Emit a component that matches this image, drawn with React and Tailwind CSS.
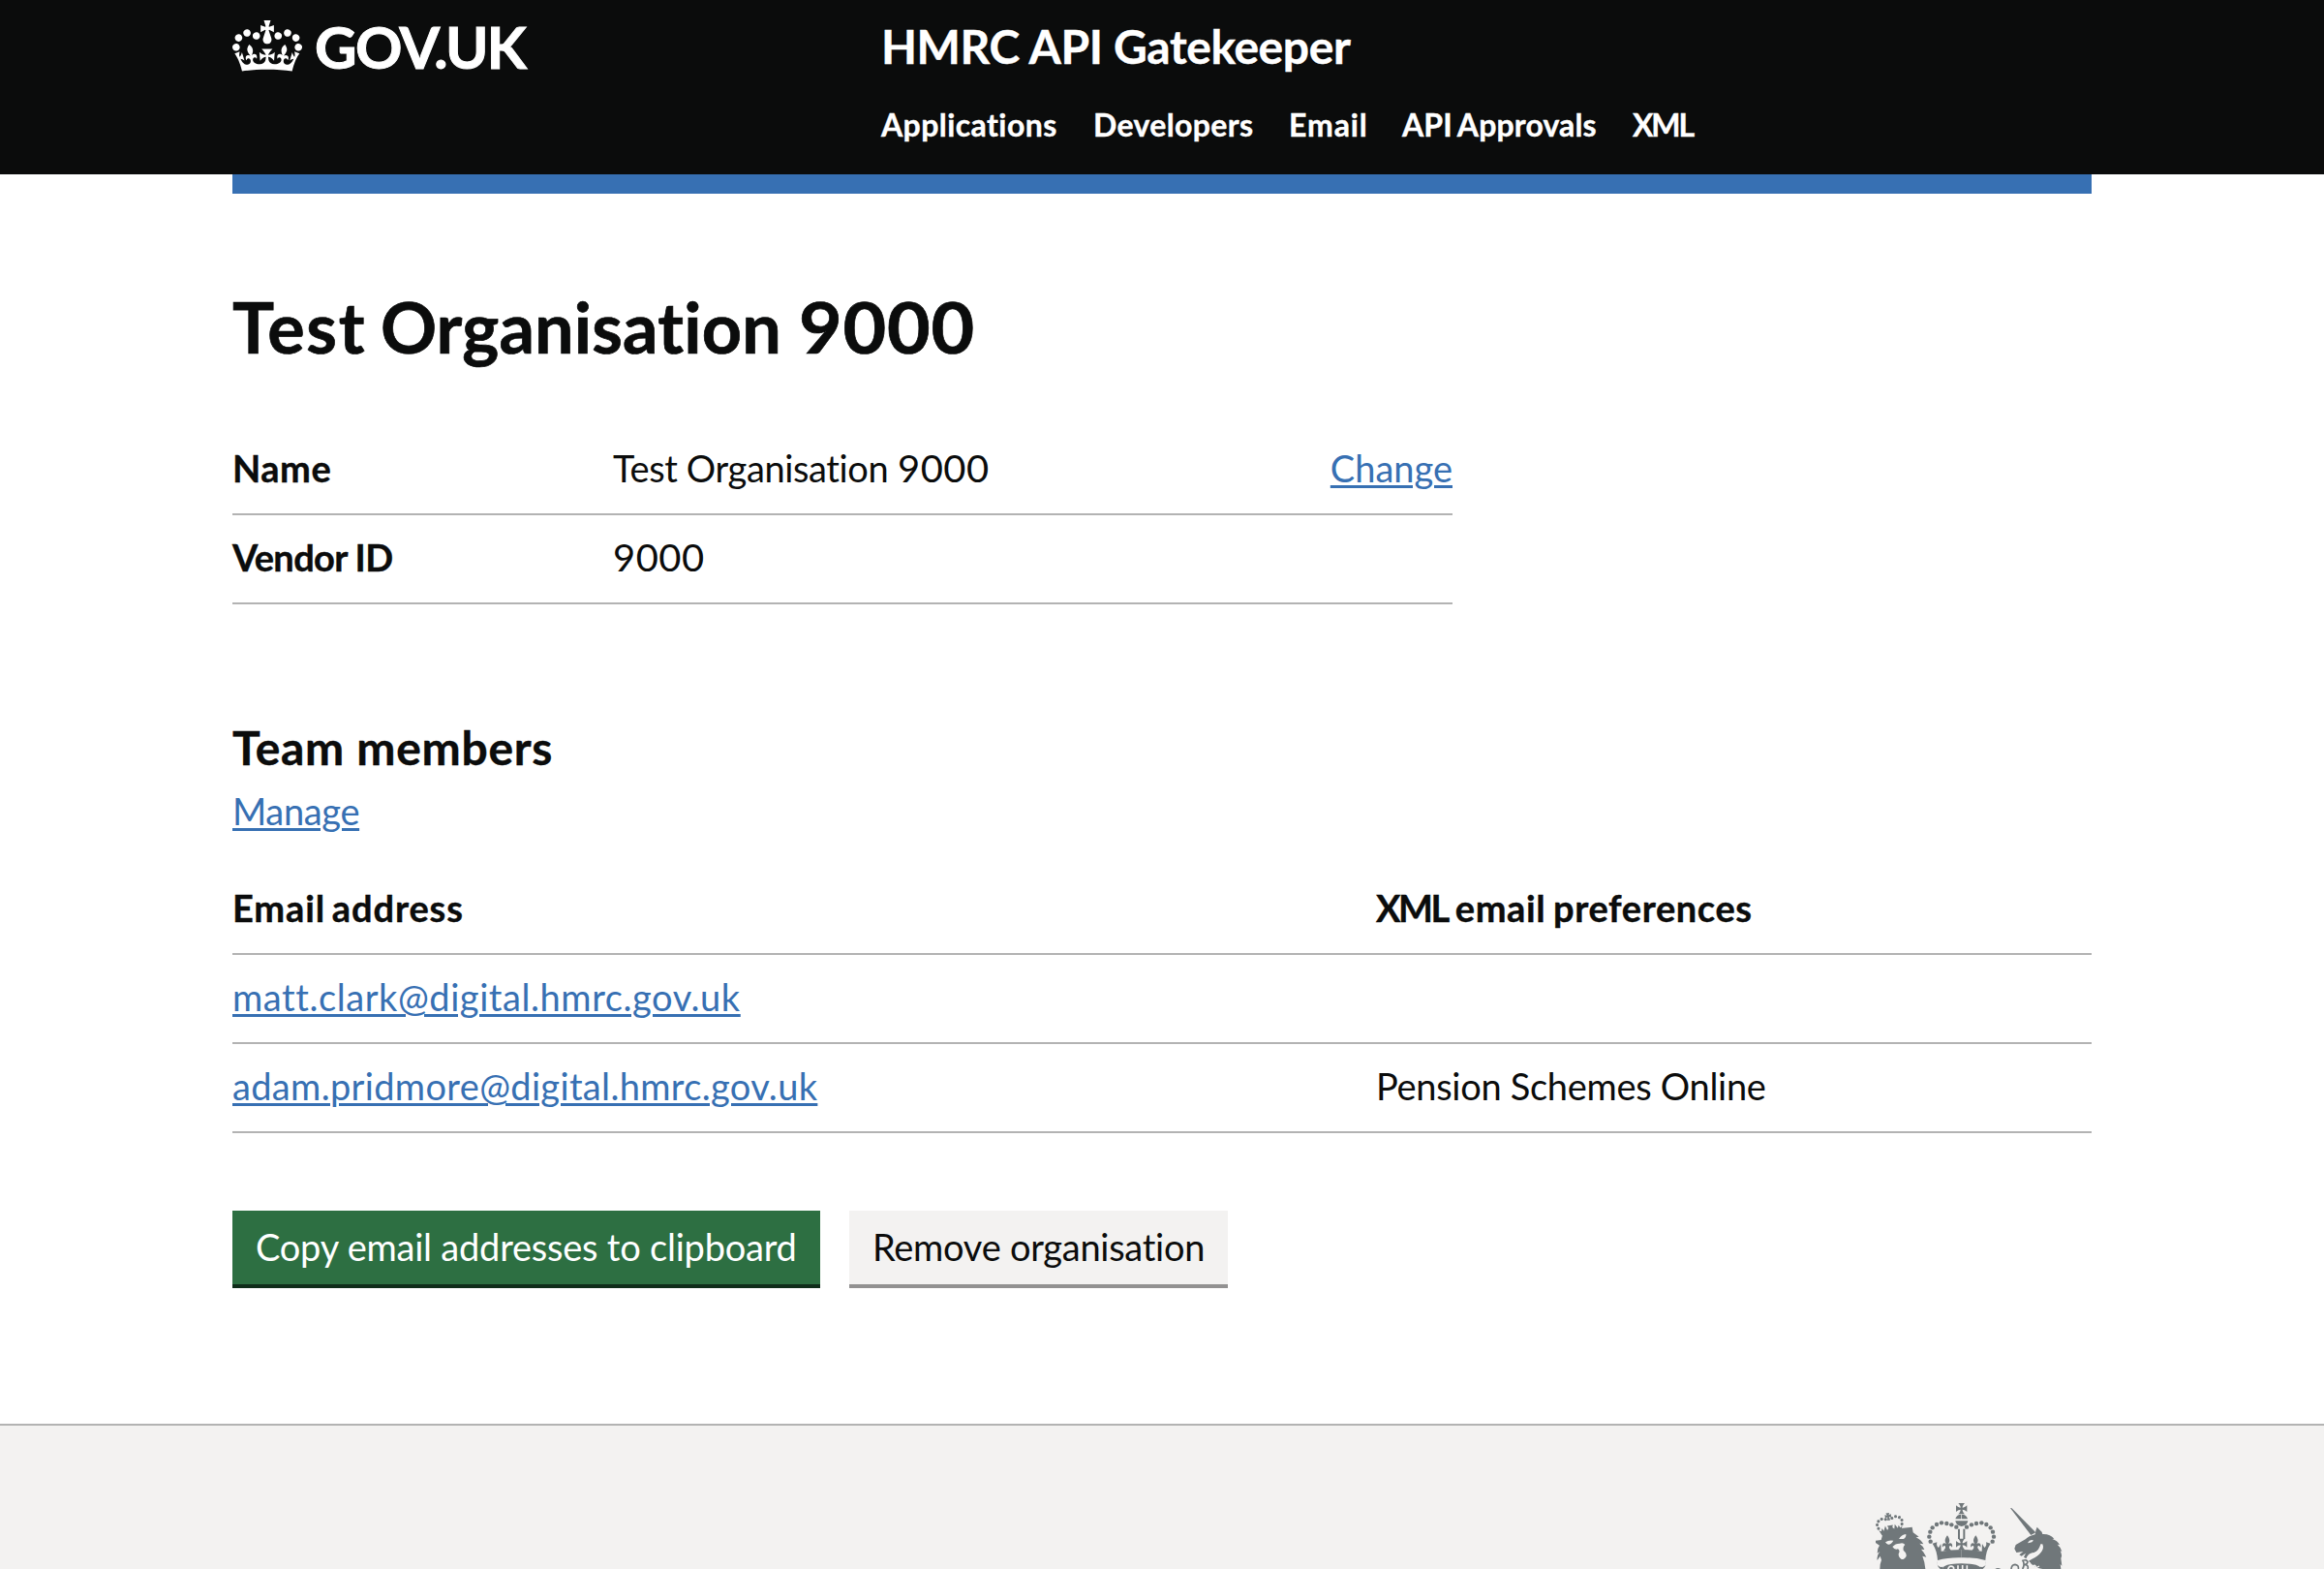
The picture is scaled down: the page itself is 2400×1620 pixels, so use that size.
import React from "react";

function CrownLogo() {
  return (
    <svg viewBox="0 0 132 97" className="h-[53px] w-[72px] shrink-0" fill="currentColor" aria-hidden="true">
      <path
        fillRule="evenodd"
        d="M25 30.2c3.5 1.5 7.7-.2 9.1-3.7 1.5-3.6-.2-7.8-3.9-9.2-3.6-1.4-7.6.3-9.1 3.9-1.4 3.5.3 7.5 3.9 9zM9 39.5c3.6 1.5 7.8-.2 9.2-3.7 1.5-3.6-.2-7.8-3.9-9.1-3.6-1.5-7.6.2-9.1 3.8-1.4 3.5.3 7.5 3.8 9zM4.4 57.2c3.5 1.5 7.7-.2 9.1-3.8 1.5-3.6-.2-7.7-3.9-9.1-3.5-1.5-7.6.3-9.1 3.8-1.4 3.5.3 7.6 3.9 9.1zm38.3-21.4c3.5 1.5 7.7-.2 9.1-3.8 1.5-3.6-.2-7.7-3.9-9.1-3.6-1.5-7.6.3-9.1 3.8-1.3 3.6.4 7.7 3.9 9.1zm64.4-5.6c-3.6 1.5-7.8-.2-9.1-3.7-1.5-3.6.2-7.8 3.8-9.2 3.6-1.4 7.7.3 9.2 3.9 1.3 3.5-.4 7.5-3.9 9zm15.9 9.3c-3.6 1.5-7.7-.2-9.1-3.7-1.5-3.6.2-7.8 3.7-9.1 3.6-1.5 7.7.2 9.2 3.8 1.5 3.5-.3 7.5-3.8 9zm4.7 17.7c-3.6 1.5-7.8-.2-9.2-3.8-1.5-3.6.2-7.7 3.9-9.1 3.6-1.5 7.7.3 9.2 3.8 1.3 3.5-.4 7.6-3.9 9.1zM89.3 35.8c-3.6 1.5-7.8-.2-9.2-3.8-1.4-3.6.2-7.7 3.9-9.1 3.6-1.5 7.7.3 9.2 3.8 1.4 3.6-.3 7.7-3.9 9.1zM69.7 17.7l8.9 4.7V9.3l-8.9 2.8c-.2-.3-.5-.6-.9-.9L72.4 0H59.6l3.5 11.2c-.3.3-.6.5-.9.9l-8.8-2.8v13.1l8.8-4.7c.3.3.6.7.9.9l-5 15.4v.1c-.2.8-.4 1.6-.4 2.4 0 4.1 3.1 7.5 7 8.1h.2c.3 0 .7.1 1 .1.4 0 .7 0 1-.1h.2c4-.6 7.1-4.1 7.1-8.1 0-.8-.1-1.7-.4-2.4V34l-5.1-15.4c.4-.2.7-.6 1-.9zM66 92.8c16.9 0 32.8 1.1 47.1 3.2 4-16.9 8.9-26.7 14-33.5l-9.6-3.4c1 4.9 1.1 7.2 0 10.2-1.5-1.4-3-4.3-4.2-8.7L108.6 76c2.8-2 5-3.2 7.5-3.3-4.4 9.4-10 11.9-13.6 11.2-4.3-.8-6.3-4.6-5.6-7.9 1-4.7 5.7-5.9 8-.5 4.3-8.7-3-11.4-7.6-8.8 7.1-7.2 7.9-13.5 2.1-21.1-8 6.1-8.1 12.3-4.5 20.8-4.7-5.4-12.1-2.5-9.5 6.2 3.4-5.2 7.9-2 7.2 3.1-.6 4.3-6.4 7.8-13.5 7.2-10.3-.9-10.9-8-11.2-13.8 2.5-.5 7.1 1.8 11 7.3L80.2 60c-4.1 4.4-8 5.3-12.3 5.4 1.4-4.4 8-11.6 8-11.6H55.5s6.4 7.2 7.9 11.6c-4.2-.1-8-1-12.3-5.4l1.4 16.4c3.9-5.5 8.5-7.7 10.9-7.3-.3 5.8-.9 12.8-11.1 13.8-7.2.6-12.9-2.9-13.5-7.2-.7-5 3.8-8.3 7.1-3.1 2.7-8.7-4.6-11.6-9.4-6.2 3.7-8.5 3.6-14.7-4.6-20.8-5.8 7.6-5 13.9 2.2 21.1-4.7-2.6-11.9.1-7.7 8.8 2.3-5.5 7.1-4.2 8.1.5.7 3.3-1.3 7.1-5.7 7.9-3.5.7-9-1.8-13.5-11.2 2.5.1 4.7 1.3 7.5 3.3l-4.7-15.4c-1.2 4.4-2.7 7.2-4.3 8.7-1.1-3-.9-5.3 0-10.2l-9.5 3.4c5 6.9 9.9 16.7 14 33.5 14.8-2.1 30.8-3.2 47.7-3.2z"
      />
    </svg>
  );
}

const BEADS = [
  [361, 410], [346, 403], [331, 399], [315, 397], [300, 402],
  [287, 412], [280, 425], [277, 440], [281, 455],
];

function HalfCrown() {
  return (
    <g>
      {BEADS.map(([x, y]) => (
        <circle key={x} cx={x} cy={y} r="6.6" />
      ))}
      <path d="M376 371C366 371 360 377 358 385H376Z" />
      <path d="M366 416h6v31h-6z" />
      <path d="M333 436C325 447 324 454 330 462C322 456 315 462 318 473C322 466 328 466 327 475L321 484H345L339 475C338 466 344 466 348 473C351 462 344 456 336 462C342 454 341 447 333 436Z" />
      <path d="M287 461L301 457C299 466 301 470 306 474L313 462L314 485Q345 480 377 480V505Q335 504 303 513C302 495 298 478 287 461Z" />
      <path d="M302 513Q298 530 312 534L320 533L318 540H311Q299 532 302 513Z" />
    </g>
  );
}

function CrestCross({ y }) {
  return (
    <path
      transform={`translate(377 ${y})`}
      d="M-10-17H10C5-12 3-7 3-3C7-3 12-5 17-10V10C12 5 7 3 3 3C3 7 5 12 10 17H-10C-5 12-3 7-3 3C-7 3-12 5-17 10V-10C-12-5-7-3-3-3C-3-7-5-12-10-17Z"
    />
  );
}

function Crest() {
  return (
    <svg viewBox="99 330 600 210" className="h-[70px] w-[200px]" fill="#70777a" aria-hidden="true">
      {/* lion */}
      <g transform="rotate(-11 155 402)">
        {[[118, 408], [116, 396], [122, 386], [133, 381], [145, 384], [165, 384], [177, 381], [188, 386], [194, 396], [192, 408]].map(([x, y]) => (
          <circle key={x} cx={x} cy={y} r="4.6" />
        ))}
        <path d="M149 366h11l-3 7 7-3v11l-7-3 2 11h-9l2-11-7 3v-11l7 3z" />
        <path d="M118 414l7 4 4-9 4 9 7-14 4 14 5-6-3-7h18l-3 7 5 6 4-14 7 14 4-9 4 9 7-4-7 17H125z" />
      </g>
      <path d="M132 436Q175 413 218 411L224 410L227 427L245 440L236 442Q252 450 259 463L247 461Q257 468 262 480L252 479Q261 488 268 503L256 500Q264 520 265 540H124Q123 526 129 512L125 500L116 513Q114 498 124 486L116 491Q115 477 123 467L111 459V452L128 450Z" />
      <g fill="#f3f2f1">
        <path d="M141 457Q152 449 166 452Q158 465 150 464Q144 463 141 457Z" />
        <path d="M183 447Q191 433 205 432Q206 443 197 447Z" />
        <path d="M163 471Q172 461 185 461Q197 457 202 465Q195 470 197 482Q207 490 206 500Q200 511 191 510Q181 504 182 493Q188 484 180 478Q170 482 163 471Z" />
      </g>
      {/* central crown */}
      <CrestCross y={353} />
      <path d="M358 391H397Q395 406 377 408Q360 406 358 391Z" />
      <HalfCrown />
      <g transform="translate(754 0) scale(-1 1)">
        <HalfCrown />
      </g>
      <CrestCross y={463} />
      <path d="M318 540Q318 529 345 525Q377 520 410 525Q437 529 437 540Z" />
      <path
        fill="none"
        stroke="#f3f2f1"
        strokeWidth="5"
        d="M335 542Q338 529 348 532Q356 536 351 542M366 529V542M380 528V542M394 529V542"
      />
      <path d="M481 540Q489 534 499 540Z" />
      {/* unicorn */}
      <path d="M528 351L533 352L607 427L592 435Z" />
      <path d="M541 477L545 465L575 448Q585 438 605 433Q606 420 611 410L621 421Q627 424 628 432Q652 431 664 446L658 447Q674 452 681 465L674 464Q686 474 688 486L683 484Q690 498 685 507L688 530L683 525L685 540H628Q600 535 585 515L594 510Q618 500 628 478Q631 467 626 466Q620 484 602 489Q582 492 577 508L570 503L576 491L563 500L556 496L568 486L553 488L547 489Z" />
      <g fill="#f3f2f1">
        <path d="M582 460Q586 449 599 450Q599 458 582 460Z" />
        <path d="M628 463Q634 480 618 494Q602 505 592 507Q584 511 580 505Q583 492 601 490Q617 484 622 463Z" />
      </g>
      <path
        fill="none"
        stroke="#70777a"
        strokeWidth="5"
        d="M531 540Q532 527 543 526Q555 528 553 540M566 540Q574 526 567 514Q578 509 582 518Q580 527 572 526Q586 527 582 540"
      />
      <path
        fill="none"
        stroke="#f3f2f1"
        strokeWidth="4"
        d="M588 520L592 538M596 533Q604 524 608 534L612 541M600 540L618 531"
      />
    </svg>
  );
}

const NAV = [
  { label: "Applications", cls: "w-[219px] tracking-[0.42px]" },
  { label: "Developers", cls: "w-[202px] tracking-[0.35px]" },
  { label: "Email", cls: "w-[117px] tracking-[0.9px]" },
  { label: "API Approvals", cls: "w-[238px] tracking-[0.15px] [word-spacing:-2px]" },
  { label: "XML", cls: "tracking-[-2.1px]" },
];

const LINK = "text-[#3770b3] underline decoration-[3px] underline-offset-[3px]";
const ROW = "flex h-[92px] border-b-2 border-[#b3b3b3] pt-[18px]";
const BOLD = "font-bold [-webkit-text-stroke:0.4px_currentColor]";

function Header() {
  return (
    <header className="bg-[#0b0c0c] text-white">
      <div className={`mx-auto flex h-[180px] w-[1920px] ${BOLD}`}>
        <a className="flex w-[670px] items-start">
          <span className="mt-[21px] mr-[13px]">
            <CrownLogo />
          </span>
          <span className="mt-[18px] text-[60px] leading-[60px] tracking-[-1.6px] [-webkit-text-stroke:1px_currentColor]">
            GOV.UK
          </span>
        </a>
        <div className="pt-[18px]">
          <div className="text-[48px] leading-[60px] tracking-[-0.4px]">HMRC API Gatekeeper</div>
          <nav className="mt-[31px] flex text-[32px] leading-[40px]">
            {NAV.map((n) => (
              <a key={n.label} className={n.cls}>{n.label}</a>
            ))}
          </nav>
        </div>
      </div>
    </header>
  );
}

export default function App() {
  return (
    <div className="flex h-[1620px] w-[2400px] flex-col overflow-hidden bg-white font-['Lato','Noto_Sans',sans-serif] text-[38px] leading-[50px] text-[#0b0c0c] [font-variant-ligatures:none]">
      <Header />
      <main className="mx-auto w-[1920px] flex-1">
        <div className="h-[20px] bg-[#3770b3]" />
        <h1 className="mt-[97px] text-[72px] leading-[80px] font-bold tracking-[0.15px] [-webkit-text-stroke:0.7px_currentColor]">
          <span className="tracking-[1.7px] [word-spacing:-4.5px]">Test </span>Organisation{" "}
          <span className="inline-block origin-left scale-x-[1.07] tracking-[0.8px]">9000</span>
        </h1>

        <dl className="mt-[63px] w-[1260px]">
          <div className={ROW}>
            <dt className={`w-[393px] tracking-[0.5px] ${BOLD}`}>Name</dt>
            <dd className="flex-1 tracking-[-0.37px]">
              Test Organisation <span className="inline-block origin-left scale-x-[1.05] tracking-[0.5px]">9000</span>
            </dd>
            <dd>
              <a className={LINK}>Change</a>
            </dd>
          </div>
          <div className={ROW}>
            <dt className={`w-[393px] tracking-[-0.65px] ${BOLD}`}>Vendor ID</dt>
            <dd>
              <span className="inline-block origin-left scale-x-[1.05] tracking-[0.5px]">9000</span>
            </dd>
          </div>
        </dl>

        <h2 className={`mt-[118px] text-[48px] leading-[60px] tracking-[0.7px] ${BOLD}`}>Team members</h2>
        <div className="mt-[10px] tracking-[-0.35px]">
          <a className={LINK}>Manage</a>
        </div>

        <div className="mt-[32px]">
          <div className={`${ROW} ${BOLD}`}>
            <div className="w-[1181px] tracking-[0.9px] [word-spacing:-3.5px]">Email address</div>
            <div className="tracking-[0.6px] [word-spacing:-2px]">
              <span className="tracking-[-2.4px]">XML</span> email preferences
            </div>
          </div>
          <div className={ROW}>
            <a className={`${LINK} tracking-[0.57px]`}>matt.clark@digital.hmrc.gov.uk</a>
          </div>
          <div className={ROW}>
            <div className="w-[1181px]">
              <a className={`${LINK} tracking-[0.34px]`}>adam.pridmore@digital.hmrc.gov.uk</a>
            </div>
            <div className="tracking-[-0.3px]">Pension Schemes Online</div>
          </div>
        </div>

        <div className="mt-[80px] flex gap-[30px]">
          <button className="flex h-[80px] w-[607px] border-b-4 border-[#0f2d1a] bg-[#2d6f42] pt-[12px] pl-[24px] tracking-[-0.22px] whitespace-nowrap text-white">
            Copy email addresses to clipboard
          </button>
          <button className="flex h-[80px] w-[391px] border-b-4 border-[#929191] bg-[#f3f2f1] pt-[12px] pl-[24px] tracking-[-0.27px] whitespace-nowrap">
            Remove organisation
          </button>
        </div>
      </main>
      <footer className="h-[150px] border-t-2 border-[#b3b3b3] bg-[#f3f2f1]">
        <div className="mx-auto flex w-[1920px] justify-end pt-[78px] pr-[27px]">
          <Crest />
        </div>
      </footer>
    </div>
  );
}
